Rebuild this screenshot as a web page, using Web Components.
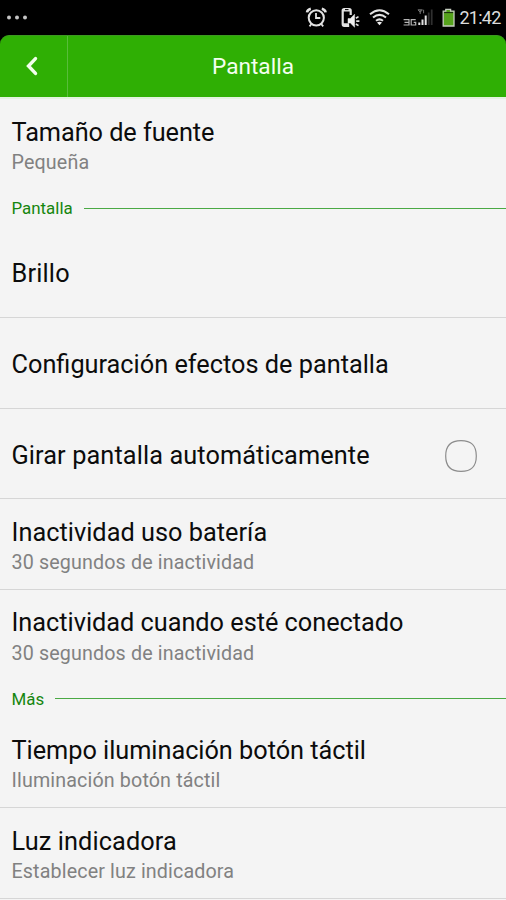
<!DOCTYPE html>
<html lang="es">
<head>
<meta charset="utf-8">
<title>Pantalla</title>
<style>
html, body { margin: 0; height: 900px; overflow: hidden; background: #000; }
body { font-family: Roboto, "Liberation Sans", sans-serif; }
</style>
</head>
<body>
<settings-screen>
  <status-bar slot="status" time="21:42"></status-bar>
  <title-bar slot="title">Pantalla</title-bar>
  <pref-row label="Tamaño de fuente" note="Pequeña" style="--track:-.06px" last></pref-row>
  <pref-category>Pantalla</pref-category>
  <pref-row label="Brillo" style="--track:.18px"></pref-row>
  <pref-row label="Configuración efectos de pantalla" style="--track:normal"></pref-row>
  <pref-row label="Girar pantalla automáticamente" style="--track:.1px"><check-box></check-box></pref-row>
  <pref-row label="Inactividad uso batería" note="30 segundos de inactividad" style="--track:.02px"></pref-row>
  <pref-row label="Inactividad cuando esté conectado" note="30 segundos de inactividad" style="--track:-.02px" last></pref-row>
  <pref-category>Más</pref-category>
  <pref-row label="Tiempo iluminación botón táctil" note="Iluminación botón táctil" style="--track:-.03px"></pref-row>
  <pref-row label="Luz indicadora" note="Establecer luz indicadora" style="--track:.1px"></pref-row>
</settings-screen>
<script>
const define = (name, render) => customElements.define(name, class extends HTMLElement {
  connectedCallback() {
    if (!this.shadowRoot) this.attachShadow({ mode: 'open' }).innerHTML = render(this);
  }
});

define('settings-screen', () => `
<style>
:host { display: flex; flex-direction: column; width: 506px; height: 900px; overflow: hidden; background: #000; }
main { flex: 1; min-height: 0; background: #f4f4f4; border-top: 2px solid #e3f3df; padding-top: .6px; overflow: hidden; }
</style>
<slot name="status"></slot><slot name="title"></slot><main><slot></slot></main>`);

define('status-bar', el => `
<style>
:host { display: flex; align-items: center; height: 35px; box-sizing: border-box; background: #000; color: #ddd; }
.more { margin: 0 auto 0 6px; }
svg { display: block; flex: none; }
time { font-size: 18px; line-height: 35px; width: 47px; letter-spacing: -0.75px; text-indent: .5px; white-space: nowrap; color: #dcdcdc; }
</style>
<svg class="more" width="24" height="35" fill="#c4c4c4"><circle cx="3" cy="17.5" r="2"/><circle cx="11" cy="17.5" r="2"/><circle cx="19" cy="17.5" r="2"/></svg>
<svg width="155" height="35" viewBox="304 0 155 35" fill="none" stroke="#e2e2e2">
  <circle cx="316.3" cy="17.8" r="7.6" stroke-width="2"/>
  <path d="M316 13v5h4.3" stroke-width="1.8"/>
  <path d="M307 12.4q.4-3 3.8-3.7M321.8 8.700q3.400.7 3.800 3.700" stroke-width="2.6"/>
  <path d="M311.5 24l-2 2.4M321.2 24l2 2.4" stroke-width="1.8"/>
  <path d="M350.7 15V10.500q0-1.500-1.500-1.500h-5q-1.500 0-1.500 1.500v13.500q0 1.800 1.500 1.800h5" stroke-width="2.200"/>
  <path d="M343 10.300h7M343 24.500h6" stroke-width="2.400"/>
  <path d="M345 9.600h3.500" stroke="#000" stroke-width="1"/>
  <path d="M348 18.600h2.400l4.200-4.400v13l-4.200-4.100h-2.400z" fill="#f0f0f0" stroke="#f0f0f0" stroke-width=".5"/>
  <path d="M355.900 18.200l2.600-1.600M356.200 21.200h3.200M355.900 24l2.600 1.600" stroke-width="1.700"/>
  <path d="M370 14.200q9.500-8 19 0M373 17.600q6.500-5.400 13 0M376 20.800q3.500-2.800 7 0" stroke-width="2"/>
  <path d="M377 22.500q2.500-1.600 5 0l-2.500 2.700z" fill="#eee" stroke="none"/>
  <path d="M403.600 19.600h5.400v5.400h-5.400M404.500 22.300h4.500M415.700 19.600h-4.500v5.400h4.500v-2.700h-2" stroke="#b4b4b4" stroke-width="1.200"/>
  <path d="M418 9.800h4.400l-2.200 2.400zM420.200 10v4M423.600 9.800v3.500" stroke="#777" stroke-width="1"/>
  <path d="M419.300 22.400v2.600M422.500 19.600v5.400M425.700 15.500v9.500" stroke-width="2"/>
  <path d="M428.700 12.500v12.500M431.700 9.500v15.500" stroke="#303030" stroke-width="1.800"/>
  <path d="M443.200 11.200h2.600v-1.900h4.800v1.900h3.400v14.800h-10.800z" fill="#56a31c" stroke="#c6cec1" stroke-width="1.300"/>
  <path d="M444.100 12.600h9" stroke="#17280c" stroke-width="1"/>
</svg>
<time>${el.getAttribute('time')}</time>`);

define('title-bar', () => `
<style>
:host { display: grid; grid-template-columns: 68px 1fr 68px; align-items: center; height: 62px; box-sizing: border-box;
  background: #2faf04; border-top: 1px solid #3c9a20; border-radius: 9px 9px 0 0; color: #f4fff0; }
.back { height: 100%; border-right: 1px solid #58bd3b; box-sizing: border-box; }
h1 { margin: 0; font-size: 22.6px; font-weight: 400; text-align: center; line-height: 60px; }
svg { display: block; }
</style>
<div class="back"><svg width="67" height="61" viewBox="0 36 67 61" fill="none" stroke="#f2ffec" stroke-width="3.400" stroke-linecap="round" stroke-linejoin="miter"><path d="M35.500 58.600l-7 7.400 7 7.400"/></svg></div>
<h1><slot></slot></h1>`);

define('pref-category', () => `
<style>
:host { display: flex; align-items: center; gap: 11px; height: 37px; box-sizing: border-box; padding: 0 0 .6px 11.5px; color: #16860f; font-size: 16.9px; }
:host::after { content: ""; flex: 1; height: 1px; background: #4aa944; }
</style>
<slot></slot>`);

define('pref-row', el => {
  const note = el.getAttribute('note');
  return `
<style>
:host { display: flex; align-items: center; height: 90.7px; box-sizing: border-box; padding: 4.3px 29px 0 11.5px; border-bottom: 1px solid #d6d6d6; }
:host([last]) { border-bottom-color: transparent; }
.text { flex: 1; white-space: nowrap; }
.label { font-size: 25.3px; line-height: 32px; letter-spacing: var(--track, normal); color: #0c0c0c; }
.note { font-size: 19.7px; line-height: 27px; padding-top: .4px; letter-spacing: .135px; color: #818181; }
</style>
<div class="text"><div class="label">${el.getAttribute('label')}</div>${note ? `<div class="note">${note}</div>` : ''}</div>
<slot></slot>`;
});

define('check-box', () => `
<style>
:host { display: block; width: 32px; height: 32px; }
svg { display: block; }
</style>
<svg width="32" height="32" fill="none" stroke="#8c8c8c" stroke-width="1.200"><path d="M16 .7C26.500.7 31.300 5.500 31.300 16S26.500 31.300 16 31.300.7 26.500.7 16 5.500.7 16 .7z"/></svg>`);
</script>
</body>
</html>
